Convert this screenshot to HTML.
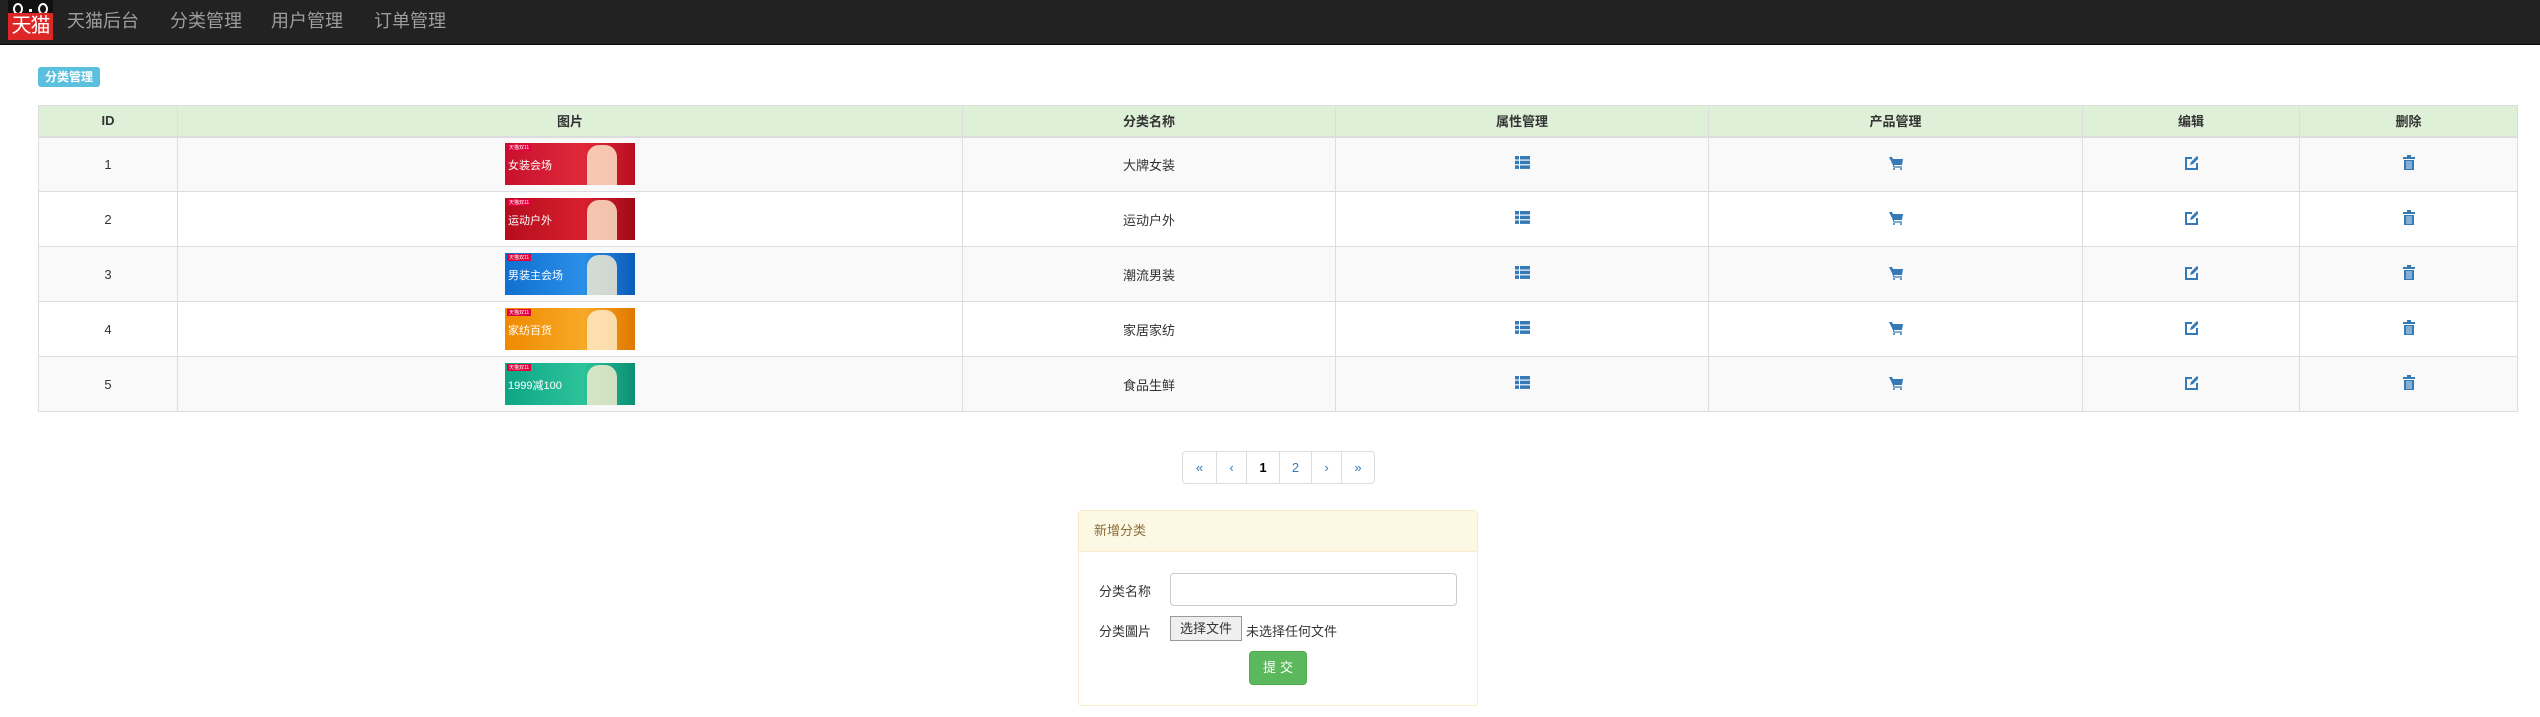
<!DOCTYPE html>
<html><head><meta charset="utf-8"><style>
*{box-sizing:border-box;margin:0;padding:0}
body{width:2540px;height:717px;background:#fff;font-family:"Liberation Sans","Noto Sans CJK SC",sans-serif;font-size:14px;color:#333;position:relative;overflow:hidden}
.nav{position:absolute;left:0;top:0;width:2540px;height:45px;background:#222;border-bottom:1px solid #080808}
.logo{position:absolute;left:8px;top:0;width:45px;height:40px}
.logo .red{position:absolute;left:0;top:13px;width:45px;height:27px;background:#dd2727;color:#fff;font-size:20px;line-height:27px;text-align:center;letter-spacing:-1px}
.nav a{position:absolute;top:10px;color:#9d9d9d;font-size:18px;line-height:22px;text-decoration:none}
.label{position:absolute;left:38px;top:67px;width:62px;height:20px;background:#5bc0de;color:#fff;font-weight:bold;font-size:12px;line-height:20px;text-align:center;border-radius:3px}
table{position:absolute;left:38px;top:105px;width:2479px;border-collapse:collapse;table-layout:fixed;border:1px solid #ddd}
th{background:#dff0d8;height:31px;border:1px solid #ddd;border-bottom:2px solid #ddd;font-size:13px;font-weight:bold;text-align:center}
td{height:55px;border:1px solid #ddd;text-align:center;font-size:13px;vertical-align:middle}
tr.o td{background:#f9f9f9}
.ban{display:inline-block;width:130px;height:42px;vertical-align:middle;position:relative;text-align:left;overflow:hidden}
.ban span{position:absolute;left:3px;top:14px;color:#fff;font-size:11px}
.ban i{position:absolute;left:2px;top:1px;background:#e0003c;color:#fff;font-size:5px;font-style:normal;padding:0 2px}
.ban b{position:absolute;right:18px;top:2px;width:30px;height:40px;border-radius:12px 12px 0 0;background:rgba(255,240,210,.8)}
.pg{position:absolute;left:1182px;top:451px;height:33px;display:flex;border:1px solid #ddd;border-radius:4px;overflow:hidden}
.pg div{height:31px;line-height:31px;text-align:center;color:#337ab7;font-size:13px;border-left:1px solid #ddd}
.pg div:first-child{border-left:none}
.panel{position:absolute;left:1078px;top:510px;width:400px;height:196px;border:1px solid #faebcc;border-radius:4px}
.ph{height:41px;background:#fcf8e3;border-bottom:1px solid #faebcc;color:#8a6d3b;font-size:13px;line-height:40px;padding-left:15px}
.f{position:absolute;font-size:13px;color:#333}
</style></head><body>
<div class="nav">
<div class="logo">
<svg width="45" height="13" style="position:absolute;left:0;top:0"><rect width="45" height="13" fill="#111"/><ellipse cx="10" cy="9" rx="4" ry="5" fill="none" stroke="#fff" stroke-width="2"/><ellipse cx="35" cy="9" rx="4" ry="5" fill="none" stroke="#fff" stroke-width="2"/><rect x="21" y="9" width="3" height="3" fill="#fff"/></svg>
<div class="red">天猫</div></div>
<a style="left:67px">天猫后台</a><a style="left:170px">分类管理</a><a style="left:271px">用户管理</a><a style="left:374px">订单管理</a>
</div>
<div class="label">分类管理</div>
<table>
<colgroup><col style="width:139px"><col style="width:785px"><col style="width:373px"><col style="width:373px"><col style="width:374px"><col style="width:217px"><col style="width:218px"></colgroup>
<tr><th>ID</th><th>图片</th><th>分类名称</th><th>属性管理</th><th>产品管理</th><th>编辑</th><th>删除</th></tr>
<tr class="o"><td>1</td><td><div class="ban" style="background:linear-gradient(90deg,#c8102e,#e02a3a 60%,#b80f20)"><i>天猫双11</i><span>女装会场</span><b></b></div></td><td>大牌女装</td>
<td><svg width="15" height="13"><g fill="#337ab7"><rect x="0" y="0" width="4" height="3.5"/><rect x="5" y="0" width="10" height="3.5"/><rect x="0" y="4.7" width="4" height="3.5"/><rect x="5" y="4.7" width="10" height="3.5"/><rect x="0" y="9.4" width="4" height="3.5"/><rect x="5" y="9.4" width="10" height="3.5"/></g></svg></td>
<td><svg width="14" height="14"><path d="M0 1h3l1 2h10l-1 6H4z" fill="#337ab7"/><path d="M2 1l3 10h8" stroke="#337ab7" fill="none" stroke-width="1.2"/><circle cx="5" cy="13" r="1" fill="#337ab7"/><circle cx="12" cy="13" r="1" fill="#337ab7"/></svg></td>
<td><svg width="14" height="14"><path d="M8 2H2v11h11V7" stroke="#337ab7" fill="none" stroke-width="2"/><path d="M6 9l1-3 6-6 2 2-6 6z" fill="#337ab7"/></svg></td>
<td><svg width="12" height="15"><rect x="4" y="0" width="4" height="2" fill="#337ab7"/><rect x="0" y="2" width="12" height="2" fill="#337ab7"/><path d="M1 5h10v10H1z" fill="#337ab7"/><path d="M4 6v8M6 6v8M8 6v8" stroke="#fff" stroke-width="0.8"/></svg></td></tr>
</table>
<div class="pg">
<div style="width:33px">«</div><div style="width:30px">‹</div><div style="width:33px;color:#000;font-weight:bold">1</div><div style="width:32px">2</div><div style="width:30px">›</div><div style="width:33px">»</div>
</div>
<div class="panel"><div class="ph">新增分类</div></div>
<div class="f" style="left:1099px;top:581px">分类名称</div>
<div style="position:absolute;left:1170px;top:573px;width:287px;height:33px;border:1px solid #ccc;border-radius:4px"></div>
<div class="f" style="left:1099px;top:621px">分类圖片</div>
<div style="position:absolute;left:1170px;top:616px;width:72px;height:25px;border:1px solid #999;background:#efefef;font-size:13px;line-height:23px;text-align:center">选择文件</div>
<div class="f" style="left:1246px;top:621px">未选择任何文件</div>
<div style="position:absolute;left:1249px;top:651px;width:58px;height:34px;background:#5cb85c;border:1px solid #4cae4c;border-radius:4px;color:#fff;font-size:13px;line-height:32px;text-align:center;letter-spacing:4px;padding-left:4px">提交</div>
<script>
var t=document.querySelector('table'),r=t.rows[1];
var d=[["2","运动户外","#b50d1e,#d9202e 60%,#a00a18","运动户外"],["3","潮流男装","#0f6fd0,#2b8fe8 60%,#0a5cb8","男装主会场"],["4","家居家纺","#f08a00,#f7a928 60%,#e07800","家纺百货"],["5","食品生鲜","#0ea586,#2cc39a 60%,#0b8f74","1999减100"]];
d.forEach(function(x,i){var n=r.cloneNode(true);n.className=(i%2==1)?"o":"";n.cells[0].textContent=x[0];n.cells[2].textContent=x[1];var b=n.querySelector('.ban');b.style.background="linear-gradient(90deg,"+x[2]+")";b.querySelector('span').textContent=x[3];t.tBodies[0].appendChild(n);});
</script>
</body></html>
